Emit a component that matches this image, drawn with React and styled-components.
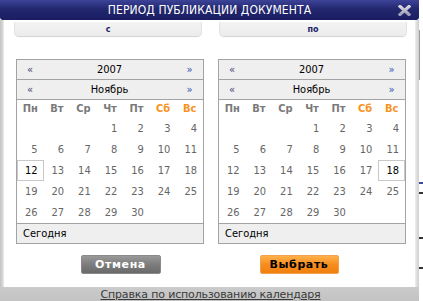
import React from 'react';
import styled, { createGlobalStyle } from 'styled-components';

const GlobalStyle = createGlobalStyle`
  html, body {
    margin: 0;
    padding: 0;
    background: #fff;
  }
  body {
    width: 423px;
    height: 301px;
    overflow: hidden;
  }
`;

const Screen = styled.div`
  display: flex;
  width: 423px;
  height: 301px;
  overflow: hidden;
`;

const Dialog = styled.div`
  width: 419px;
  flex: none;
  display: flex;
  flex-direction: column;
  font-family: "DejaVu Sans Condensed", "DejaVu Sans", sans-serif;
`;

const TitleBar = styled.div`
  height: 20px;
  flex: none;
  display: grid;
  grid-template-columns: 1fr auto 1fr;
  align-items: center;
  background: linear-gradient(#3d4398, #22276f 45%, #1a1d61);
  border-radius: 0 0 3px 3px;
  color: #fff;
  font-size: 12px;
  letter-spacing: 0.1px;
`;

const Title = styled.div`
  grid-column: 2;
  line-height: 20px;
`;

const Close = styled.div`
  justify-self: end;
  margin-right: 8px;
  display: flex;
`;

const Body = styled.div`
  flex: 1;
  display: flex;
`;

const Edge = styled.div`
  width: 4px;
  flex: none;
  background: ${p => p.$side === 'left'
    ? 'linear-gradient(90deg, #c2c2c2, #d6d6d6 60%, #ececec)'
    : 'linear-gradient(90deg, #efefef, #dcdcdc 50%, #d0d0d0)'};
`;

const Content = styled.div`
  flex: 1;
  display: flex;
  flex-direction: column;
  background: #fff;
`;

const LabelRow = styled.div`
  display: flex;
  gap: 19px;
  padding: 2px 0 0 11px;
`;

const RangeLabel = styled.div`
  width: 186px;
  height: 14px;
  background: linear-gradient(#f3f3f3, #ececec);
  border-radius: 0 0 4px 4px;
  box-shadow: 0 1px 1px #d2d2d2, 1px 0 0 #e4e4e4, -1px 0 0 #e4e4e4;
  display: flex;
  align-items: center;
  justify-content: center;
  font-family: "DejaVu Sans", sans-serif;
  font-size: 8px;
  font-weight: bold;
  color: #1c2266;
`;

const CalendarRow = styled.div`
  display: flex;
  gap: 14px;
  padding-left: 12px;
  margin-top: 23px;
`;

const Calendar = styled.div`
  width: 188px;
  box-sizing: border-box;
  border: 1px solid #a3a3a3;
  font-size: 11px;
`;

const NavRow = styled.div`
  height: 19px;
  display: grid;
  grid-template-columns: 26px 1fr 27px;
  align-items: center;
  background: #efefef;
  border-bottom: 1px solid #a3a3a3;
  color: #000;
  text-align: center;
`;

const Arrow = styled.span`
  color: ${p => (p.$right ? '#2f4fb0' : '#3c3f78')};
  font-size: 11px;
`;

const Days = styled.div`
  display: grid;
  grid-template-columns: repeat(7, 1fr);
  grid-template-rows: 18px repeat(5, 21px);
  border-bottom: 1px solid #a3a3a3;
`;

const DayHead = styled.div`
  text-align: center;
  line-height: 18px;
  font-weight: bold;
  color: ${p => (p.$weekend ? '#f7941d' : '#7a7a7a')};
`;

const Day = styled.div`
  box-sizing: border-box;
  text-align: right;
  padding-right: ${p => (p.$selected ? '5px' : '6px')};
  line-height: ${p => (p.$selected ? '19px' : '21px')};
  color: ${p => (p.$selected ? '#000' : '#666')};
  border: ${p => (p.$selected ? '1px solid #c8c8c8' : 'none')};
`;

const Today = styled.div`
  height: 19px;
  line-height: 19px;
  padding-left: 6px;
  background: #efefef;
  color: #000;
`;

const ButtonRow = styled.div`
  display: flex;
  justify-content: center;
  gap: 99px;
  margin-top: 11px;
`;

const Button = styled.div`
  width: ${p => p.$w}px;
  height: 19px;
  box-sizing: border-box;
  border-radius: 2px;
  display: flex;
  align-items: center;
  justify-content: center;
  font-family: "DejaVu Sans", sans-serif;
  font-size: 11px;
  font-weight: bold;
  letter-spacing: 0.6px;
  color: ${p => (p.$primary ? '#000' : '#fff')};
  background: ${p => (p.$primary
    ? 'linear-gradient(#ffb04a, #f78d1f 50%, #f0800f)'
    : 'linear-gradient(#999, #7d7d7d 50%, #6a6a6a)')};
  border: 1px solid ${p => (p.$primary ? '#f2a24a' : '#8a8a8a')};
`;

const Footer = styled.div`
  margin-top: auto;
  height: 14px;
  flex: none;
  background: linear-gradient(#cbcbcb, #c3c3c3);
  display: flex;
  justify-content: center;
`;

const HelpLink = styled.a`
  font-family: "DejaVu Sans", sans-serif;
  font-size: 11px;
  line-height: 15px;
  letter-spacing: -0.15px;
  margin-left: 2px;
  color: #3a3a3a;
  text-decoration: underline;
  text-underline-offset: 1px;
`;

const PageEdge = styled.div`
  flex: 1;
  display: flex;
  flex-direction: column;
  background: #fff;
`;

const PageMark = styled.div`
  height: ${p => p.$h}px;
  margin-top: ${p => p.$top}px;
  width: ${p => p.$w || 4}px;
  background: ${p => p.$c};
`;

const weekDays = ['Пн', 'Вт', 'Ср', 'Чт', 'Пт', 'Сб', 'Вс'];

const buildWeeks = () => {
  const cells = [null, null, null];
  for (let d = 1; d <= 30; d++) cells.push(d);
  while (cells.length < 35) cells.push(null);
  return cells;
};

const CalendarView = ({ selected }) => (
  <Calendar>
    <NavRow>
      <Arrow>«</Arrow>
      <span>2007</span>
      <Arrow $right>»</Arrow>
    </NavRow>
    <NavRow>
      <Arrow>«</Arrow>
      <span>Ноябрь</span>
      <Arrow $right>»</Arrow>
    </NavRow>
    <Days>
      {weekDays.map((w, i) => (
        <DayHead key={w} $weekend={i > 4}>{w}</DayHead>
      ))}
      {buildWeeks().map((d, i) => (
        <Day key={i} $selected={d === selected}>{d || ''}</Day>
      ))}
    </Days>
    <Today>Сегодня</Today>
  </Calendar>
);

const CloseIcon = () => (
  <svg width="13" height="11" viewBox="0 0 13 11">
    <defs>
      <linearGradient id="xg" x1="0" y1="0" x2="0" y2="1">
        <stop offset="0" stopColor="#d8d8e2" />
        <stop offset="1" stopColor="#9c9eb6" />
      </linearGradient>
    </defs>
    <path d="M2 1.5 L11 9.5 M11 1.5 L2 9.5" stroke="url(#xg)" strokeWidth="3.2" strokeLinecap="square" />
  </svg>
);

const App = () => (
  <Screen>
    <GlobalStyle />
    <Dialog>
      <TitleBar>
        <Title>ПЕРИОД ПУБЛИКАЦИИ ДОКУМЕНТА</Title>
        <Close><CloseIcon /></Close>
      </TitleBar>
      <Body>
        <Edge $side="left" />
        <Content>
          <LabelRow>
            <RangeLabel>с</RangeLabel>
            <RangeLabel>по</RangeLabel>
          </LabelRow>
          <CalendarRow>
            <CalendarView selected={12} />
            <CalendarView selected={18} />
          </CalendarRow>
          <ButtonRow>
            <Button $w={80}>Отмена</Button>
            <Button $w={79} $primary>Выбрать</Button>
          </ButtonRow>
        </Content>
        <Edge $side="right" />
      </Body>
      <Footer>
        <HelpLink>Справка по использованию календаря</HelpLink>
      </Footer>
    </Dialog>
    <PageEdge>
      <PageMark $top={30} $h={50} $w={1} $c="#9a9a9a" />
      <PageMark $top={102} $h={2} $c="#3a4c9a" />
      <PageMark $top={8} $h={2} $c="#333" />
      <PageMark $top={43} $h={2} $c="#333" />
      <PageMark $top={28} $h={2} $c="#333" />
    </PageEdge>
  </Screen>
);

export default App;
